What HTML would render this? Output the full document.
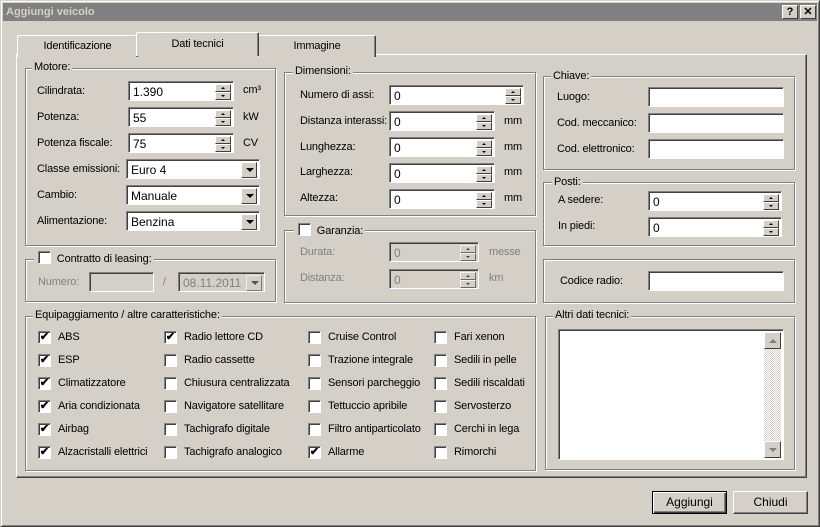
<!DOCTYPE html><html><head><style>
*{box-sizing:border-box;margin:0;padding:0}
body{width:820px;height:527px;background:#d4d0c8;font-family:"Liberation Sans",Arial,sans-serif;font-size:11px;color:#000;position:relative;overflow:hidden}
.a{position:absolute}
.win{left:0;top:0;width:820px;height:527px;border:1px solid;border-color:#d4d0c8 #404040 #404040 #d4d0c8;box-shadow:inset 1px 1px #fff,inset -1px -1px #808080}
.title{left:3px;top:3px;width:814px;height:18px;background:#808080;color:#d4d0c8;font-weight:bold;font-size:11px;padding:3px 3px}
.tb{top:5px;width:16px;height:14px;background:#d4d0c8;border:1px solid;border-color:#fff #404040 #404040 #fff;font-weight:bold;font-size:11px;text-align:center;line-height:12px;color:#000}
.pane{left:16px;top:54px;width:791px;height:424px;border:1px solid;border-color:#fff #404040 #404040 #fff;box-shadow:inset -1px -1px #808080}
.tab{height:22px;border:1px solid;border-bottom:none;border-color:#fff #404040 #404040 #fff;border-radius:2px 2px 0 0;box-shadow:inset -1px 0 #808080;text-align:center;padding-top:4px;background:#d4d0c8}
.g{border:1px solid #808080;box-shadow:1px 1px #fff,inset 1px 1px #fff}
.gl{background:#d4d0c8;padding:0 2px}
.in{background:#fff;border:1px solid;border-color:#808080 #fff #fff #808080;box-shadow:inset 1px 1px #404040;padding:3px 4px;height:20px;font-size:12px}
.dis{background:#d4d0c8;color:#808080}
.sp{position:absolute;right:2px;top:2px;width:16px;height:16px}
.sp div{height:8px;border:1px solid;border-color:#fff #404040 #404040 #fff;background:#d4d0c8;position:relative}
.sp div:after{content:"";position:absolute;left:5px;top:2px;border:2px solid transparent}
.sp .u:after{border-bottom-color:#000;border-top:none}
.sp .d:after{border-top-color:#000;border-bottom:none}
.dd{position:absolute;right:2px;top:2px;width:16px;height:16px;border:1px solid;border-color:#fff #404040 #404040 #fff;background:#d4d0c8}
.dd:after{content:"";position:absolute;left:4px;top:5px;border:4px solid transparent;border-top-color:#000;border-bottom:none}
.cb{width:13px;height:13px;background:#fff;border:1px solid;border-color:#808080 #fff #fff #808080;box-shadow:inset 1px 1px #404040;font-size:11px;line-height:11px;text-align:center;font-weight:bold}
.btn{width:75px;height:23px;border:1px solid;border-color:#fff #404040 #404040 #fff;box-shadow:inset -1px -1px #808080;text-align:center;line-height:20px;font-size:12px}
.l{font-size:11px;letter-spacing:-0.15px;white-space:nowrap}
.gr{color:#808080}
</style></head><body>
<div class="a win"></div>
<div class="a title">Aggiungi veicolo</div>
<div class="a tb" style="left:782px">?</div>
<div class="a tb" style="left:800px">✕</div>

<div class="a pane"></div>
<div class="a tab l" style="left:17px;top:35px;width:121px">Identificazione</div>
<div class="a tab l" style="left:258px;top:35px;width:118px">Immagine</div>
<div class="a tab l" style="left:136px;top:32px;width:123px;height:24px;padding-top:5px">Dati tecnici</div>

<!-- Motore -->
<div class="a g" style="left:25px;top:68px;width:251px;height:178px"></div>
<div class="a gl l" style="left:32px;top:61px">Motore:</div>
<div class="a l" style="left:37px;top:85px">Cilindrata:</div>
<div class="a in" style="left:128px;top:81px;width:106px">1.390<div class="sp"><div class="u"></div><div class="d"></div></div></div>
<div class="a l" style="left:243px;top:84px">cm³</div>
<div class="a l" style="left:37px;top:111px">Potenza:</div>
<div class="a in" style="left:128px;top:107px;width:106px">55<div class="sp"><div class="u"></div><div class="d"></div></div></div>
<div class="a l" style="left:243px;top:111px">kW</div>
<div class="a l" style="left:37px;top:137px">Potenza fiscale:</div>
<div class="a in" style="left:128px;top:133px;width:106px">75<div class="sp"><div class="u"></div><div class="d"></div></div></div>
<div class="a l" style="left:243px;top:137px">CV</div>
<div class="a l" style="left:37px;top:163px">Classe emissioni:</div>
<div class="a in" style="left:126px;top:159px;width:134px">Euro 4<div class="dd"></div></div>
<div class="a l" style="left:37px;top:189px">Cambio:</div>
<div class="a in" style="left:126px;top:185px;width:134px">Manuale<div class="dd"></div></div>
<div class="a l" style="left:37px;top:215px">Alimentazione:</div>
<div class="a in" style="left:126px;top:211px;width:134px">Benzina<div class="dd"></div></div>

<!-- Contratto -->
<div class="a g" style="left:25px;top:259px;width:251px;height:43px"></div>
<div class="a gl l" style="left:34px;top:251px;padding-left:4px"><span class="cb" style="display:inline-block;vertical-align:-2px"></span>&nbsp; Contratto di leasing:</div>
<div class="a l gr" style="left:38px;top:276px">Numero:</div>
<div class="a in dis" style="left:89px;top:272px;width:65px"></div>
<div class="a l gr" style="left:163px;top:276px">/</div>
<div class="a in dis" style="left:178px;top:272px;width:87px">08.11.2011<div class="dd" style="opacity:.6"></div></div>

<!-- Dimensioni -->
<div class="a g" style="left:284px;top:72px;width:252px;height:144px"></div>
<div class="a gl l" style="left:293px;top:65px">Dimensioni:</div>
<div class="a l" style="left:300px;top:89px">Numero di assi:</div>
<div class="a in" style="left:389px;top:85px;width:135px">0<div class="sp"><div class="u"></div><div class="d"></div></div></div>
<div class="a l" style="left:300px;top:115px">Distanza interassi:</div>
<div class="a in" style="left:389px;top:111px;width:106px">0<div class="sp"><div class="u"></div><div class="d"></div></div></div>
<div class="a l" style="left:504px;top:115px">mm</div>
<div class="a l" style="left:300px;top:141px">Lunghezza:</div>
<div class="a in" style="left:389px;top:137px;width:106px">0<div class="sp"><div class="u"></div><div class="d"></div></div></div>
<div class="a l" style="left:504px;top:141px">mm</div>
<div class="a l" style="left:300px;top:166px">Larghezza:</div>
<div class="a in" style="left:389px;top:163px;width:106px">0<div class="sp"><div class="u"></div><div class="d"></div></div></div>
<div class="a l" style="left:504px;top:166px">mm</div>
<div class="a l" style="left:300px;top:192px">Altezza:</div>
<div class="a in" style="left:389px;top:189px;width:106px">0<div class="sp"><div class="u"></div><div class="d"></div></div></div>
<div class="a l" style="left:504px;top:192px">mm</div>

<!-- Garanzia -->
<div class="a g" style="left:284px;top:230px;width:252px;height:73px"></div>
<div class="a gl l" style="left:294px;top:223px;padding-left:4px"><span class="cb" style="display:inline-block;vertical-align:-2px"></span>&nbsp; Garanzia:</div>
<div class="a l gr" style="left:300px;top:246px">Durata:</div>
<div class="a in dis" style="left:389px;top:242px;width:90px">0<div class="sp" style="opacity:.7"><div class="u"></div><div class="d"></div></div></div>
<div class="a l gr" style="left:489px;top:246px">messe</div>
<div class="a l gr" style="left:300px;top:272px">Distanza:</div>
<div class="a in dis" style="left:389px;top:269px;width:90px">0<div class="sp" style="opacity:.7"><div class="u"></div><div class="d"></div></div></div>
<div class="a l gr" style="left:489px;top:272px">km</div>

<!-- Chiave -->
<div class="a g" style="left:543px;top:76px;width:252px;height:94px"></div>
<div class="a gl l" style="left:551px;top:70px">Chiave:</div>
<div class="a l" style="left:557px;top:91px">Luogo:</div>
<div class="a in" style="left:648px;top:87px;width:136px"></div>
<div class="a l" style="left:557px;top:117px">Cod. meccanico:</div>
<div class="a in" style="left:648px;top:113px;width:136px"></div>
<div class="a l" style="left:557px;top:143px">Cod. elettronico:</div>
<div class="a in" style="left:648px;top:139px;width:136px"></div>

<!-- Posti -->
<div class="a g" style="left:543px;top:182px;width:252px;height:64px"></div>
<div class="a gl l" style="left:552px;top:176px">Posti:</div>
<div class="a l" style="left:558px;top:194px">A sedere:</div>
<div class="a in" style="left:648px;top:191px;width:134px">0<div class="sp"><div class="u"></div><div class="d"></div></div></div>
<div class="a l" style="left:558px;top:220px">In piedi:</div>
<div class="a in" style="left:648px;top:217px;width:134px">0<div class="sp"><div class="u"></div><div class="d"></div></div></div>

<!-- Codice radio -->
<div class="a g" style="left:543px;top:259px;width:252px;height:44px"></div>
<div class="a l" style="left:560px;top:275px">Codice radio:</div>
<div class="a in" style="left:648px;top:271px;width:136px"></div>

<!-- Altri -->
<div class="a g" style="left:545px;top:316px;width:250px;height:154px"></div>
<div class="a gl l" style="left:553px;top:309px">Altri dati tecnici:</div>
<div class="a in" style="left:558px;top:329px;width:226px;height:131px;padding:0">
 <div class="a" style="right:2px;top:2px;width:17px;height:126px;background:repeating-conic-gradient(#fff 0 25%,#d4d0c8 0 50%) 0 0/2px 2px"></div>
 <div class="a" style="right:2px;top:2px;width:17px;height:17px;background:#d4d0c8;border:1px solid;border-color:#fff #404040 #404040 #fff"><div class="a" style="left:4px;top:6px;border:4px solid transparent;border-bottom-color:#808080;border-top:none"></div></div>
 <div class="a" style="right:2px;bottom:1px;width:17px;height:17px;background:#d4d0c8;border:1px solid;border-color:#fff #404040 #404040 #fff"><div class="a" style="left:4px;top:6px;border:4px solid transparent;border-top-color:#808080;border-bottom:none"></div></div>
</div>

<!-- Equipaggiamento -->
<div class="a g" style="left:25px;top:316px;width:511px;height:155px"></div>
<div class="a gl l" style="left:33px;top:309px">Equipaggiamento / altre caratteristiche:</div>
<div id="eq"></div>
<script>
var cols=[38,164,308,434],rows=[331,354,377,400,423,446];
var items=[[["ABS",1],["ESP",1],["Climatizzatore",1],["Aria condizionata",1],["Airbag",1],["Alzacristalli elettrici",1]],
[["Radio lettore CD",1],["Radio cassette",0],["Chiusura centralizzata",0],["Navigatore satellitare",0],["Tachigrafo digitale",0],["Tachigrafo analogico",0]],
[["Cruise Control",0],["Trazione integrale",0],["Sensori parcheggio",0],["Tettuccio apribile",0],["Filtro antiparticolato",0],["Allarme",1]],
[["Fari xenon",0],["Sedili in pelle",0],["Sedili riscaldati",0],["Servosterzo",0],["Cerchi in lega",0],["Rimorchi",0]]];
var h="";
for(var c=0;c<4;c++)for(var r=0;r<6;r++){var it=items[c][r];
h+='<div class="a cb" style="left:'+cols[c]+'px;top:'+rows[r]+'px">'+(it[1]?'✔':'')+'</div><div class="a l" style="left:'+(cols[c]+20)+'px;top:'+(rows[r])+'px">'+it[0]+'</div>';}
document.getElementById("eq").innerHTML=h;
</script>

<div class="a btn" style="left:652px;top:491px;border-color:#000;box-shadow:inset 1px 1px #fff,inset -1px -1px #404040,inset -2px -2px #808080">Aggiungi</div>
<div class="a btn" style="left:733px;top:491px">Chiudi</div>
</body></html>
